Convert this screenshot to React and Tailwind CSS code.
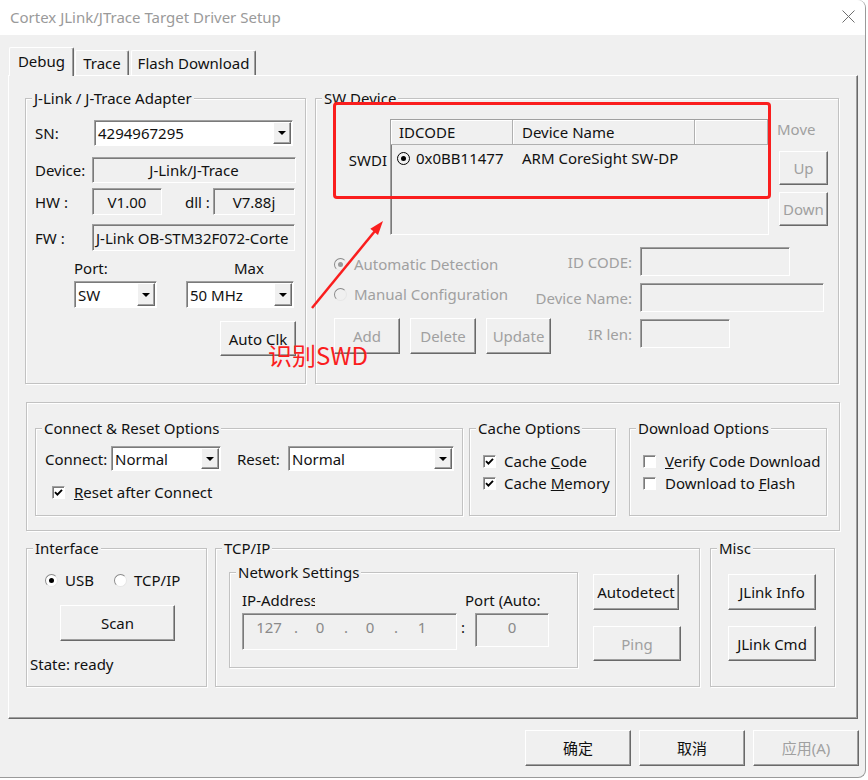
import React from 'react';

const raised =
  'bg-[#f0f0f0] border border-t-white border-l-white border-r-[#696969] border-b-[#696969] shadow-[inset_-1px_-1px_0_#a0a0a0]';
const sunken =
  'border border-t-[#a0a0a0] border-l-[#a0a0a0] border-r-white border-b-white shadow-[inset_1px_1px_0_#7a7a7a]';

function Group({ title, className = '', children }) {
  return (
    <div className={`relative shrink-0 border border-[#c2c2c2] shadow-[inset_1px_1px_0_#fff,1px_1px_0_#fff] ${className}`}>
      {title && (
        <span className="absolute -top-[11px] left-[6px] px-[2px] bg-[#f0f0f0] leading-[20px] whitespace-nowrap">
          {title}
        </span>
      )}
      {children}
    </div>
  );
}

function Btn({ disabled, className = '', children }) {
  return (
    <div className={`${raised} shrink-0 flex items-center justify-center ${disabled ? 'text-[#a0a0a0]' : ''} ${className}`}>
      {children}
    </div>
  );
}

function Field({ className = '', children }) {
  return <div className={`${sunken} shrink-0 flex items-center whitespace-nowrap overflow-hidden ${className}`}>{children}</div>;
}

function Arrow() {
  return (
    <svg width="8" height="4" viewBox="0 0 8 4">
      <path d="M0 0h8L4 4z" fill="#000" />
    </svg>
  );
}

function Combo({ value, className = '' }) {
  return (
    <div className={`${sunken} shrink-0 bg-white flex items-stretch p-[1px] ${className}`}>
      <span className="flex-1 flex items-center pl-[2px] whitespace-nowrap overflow-hidden">{value}</span>
      <span className={`${raised} w-[18px] flex items-center justify-center`}>
        <Arrow />
      </span>
    </div>
  );
}

function Check({ checked }) {
  return (
    <span className={`${sunken} w-[13px] h-[13px] shrink-0 bg-white flex items-center justify-center`}>
      {checked && (
        <svg width="9" height="9" viewBox="0 0 9 9">
          <path d="M1 4.2 L3.4 6.6 L8 1.8" stroke="#000" strokeWidth="1.9" fill="none" />
        </svg>
      )}
    </span>
  );
}

function Radio({ checked, disabled }) {
  return (
    <span
      className={`w-[13px] h-[13px] shrink-0 rounded-full border border-t-[#8a8a8a] border-l-[#8a8a8a] border-r-[#e6e6e6] border-b-[#e6e6e6] flex items-center justify-center ${
        disabled ? 'bg-[#f0f0f0]' : 'bg-white'
      }`}
    >
      {checked && <span className={`w-[5px] h-[5px] rounded-full ${disabled ? 'bg-[#9a9a9a]' : 'bg-black'}`} />}
    </span>
  );
}

function Tab({ active, className = '', children }) {
  return (
    <div
      className={`flex items-center justify-center bg-[#f0f0f0] border-t border-l border-r border-t-white border-l-white border-r-[#696969] shadow-[inset_-1px_0_0_#a0a0a0] rounded-t-[2px] ${
        active ? 'relative z-10 h-[29px] -mb-[1px] pb-[3px]' : 'h-[25px] pb-[1px]'
      } ${className}`}
    >
      {children}
    </div>
  );
}

const header = 'flex items-center border-r border-b border-[#b0b0b0] shadow-[inset_1px_1px_0_#fff]';

export default function App() {
  return (
    <div className="relative w-[868px] h-[780px] bg-white overflow-hidden font-['Noto_Sans','Noto_Sans_CJK_SC',sans-serif] text-[15px] leading-[20px] text-[#111]">
      <div className="w-[866px] h-[778px] bg-[#f0f0f0] border-r border-b border-[#9a9a9a] rounded-r-[8px] flex flex-col">
        {/* title bar */}
        <div className="h-[35px] shrink-0 bg-white rounded-tr-[8px] flex items-center justify-between pl-[10px] pr-[10px] pb-[2px]">
          <span className="text-[15px] text-[#9a9a9a]">Cortex JLink/JTrace Target Driver Setup</span>
          <svg width="13" height="13" viewBox="0 0 13 13">
            <path d="M0.5 0.5L12.5 12.5M12.5 0.5L0.5 12.5" stroke="#6e6e6e" strokeWidth="1" />
          </svg>
        </div>

        <div className="pl-[8px] flex flex-col">
          {/* tabs */}
          <div className="mt-[12px] flex items-end">
            <Tab active className="ml-[1px] w-[65px]">Debug</Tab>
            <Tab className="ml-[1px] w-[54px]">Trace</Tab>
            <Tab className="ml-[2px] w-[125px]">Flash Download</Tab>
          </div>

          {/* tab panel */}
          <div className="w-[850px] h-[644px] border border-t-white border-l-white border-r-[#696969] border-b-[#696969] shadow-[inset_-1px_-1px_0_#a0a0a0] pl-[16px] pt-[22px] flex flex-col">
            <div className="flex gap-[9px]">
              <Group title="J-Link / J-Trace Adapter" className="w-[281px] h-[286px] pl-[9px] pt-[21px] flex flex-col">
                <div className="flex items-center h-[26px]">
                  <span className="w-[59px]">SN:</span>
                  <Combo value="4294967295" className="w-[199px] h-[26px]" />
                </div>
                <div className="flex items-center h-[26px] mt-[11px]">
                  <span className="w-[57px]">Device:</span>
                  <Field className="w-[204px] h-[26px] justify-center">J-Link/J-Trace</Field>
                </div>
                <div className="flex items-center h-[27px] mt-[5px]">
                  <span className="w-[57px]">HW :</span>
                  <Field className="w-[70px] h-[27px] justify-center">V1.00</Field>
                  <span className="w-[51px] pl-[23px] whitespace-nowrap">dll :</span>
                  <Field className="w-[82px] h-[27px] justify-center">V7.88j</Field>
                </div>
                <div className="flex items-center h-[27px] mt-[9px]">
                  <span className="w-[57px]">FW :</span>
                  <Field className="w-[203px] h-[27px] pl-[3px]">J-Link OB-STM32F072-Corte</Field>
                </div>
                <div className="flex mt-[7px]">
                  <span className="ml-[39px] w-[160px]">Port:</span>
                  <span>Max</span>
                </div>
                <div className="flex mt-[3px]">
                  <Combo value="SW" className="ml-[39px] w-[83px] h-[27px]" />
                  <Combo value="50 MHz" className="ml-[29px] w-[108px] h-[27px]" />
                </div>
                <Btn className="ml-[185px] mt-[13px] w-[76px] h-[35px]">Auto Clk</Btn>
              </Group>

              <Group title="SW Device" className="w-[524px] h-[286px] pt-[20px] flex flex-col">
                <div className="flex">
                  <div className="w-[74px] shrink-0 pt-[31px] pr-[3px] flex justify-end">SWDI</div>
                  <div className={`${sunken} w-[379px] h-[116px] shrink-0 flex flex-col`}>
                    <div className="flex h-[25px] shrink-0">
                      <div className={`${header} w-[122px] pl-[8px]`}>IDCODE</div>
                      <div className={`${header} w-[182px] pl-[9px]`}>Device Name</div>
                      <div className={`${header} flex-1`} />
                    </div>
                    <div className="mt-[3px] flex items-center h-[20px]">
                      <div className="w-[122px] pl-[6px] flex items-center gap-[6px]">
                        <span className="w-[13px] h-[13px] rounded-full border-[1.5px] border-black flex items-center justify-center">
                          <span className="w-[5px] h-[5px] rounded-full bg-black" />
                        </span>
                        0x0BB11477
                      </div>
                      <div className="pl-[9px]">ARM CoreSight SW-DP</div>
                    </div>
                  </div>
                  <div className="ml-[8px] flex flex-col">
                    <span className="text-[#a0a0a0]">Move</span>
                    <Btn disabled className="ml-[2px] mt-[12px] w-[49px] h-[34px]">Up</Btn>
                    <Btn disabled className="ml-[2px] mt-[7px] w-[49px] h-[34px]">Down</Btn>
                  </div>
                </div>

                <div className="mt-[12px] pl-[18px] flex text-[#a0a0a0]">
                  <div className="w-[217px] shrink-0 pt-[7px] flex flex-col">
                    <div className="flex items-center h-[20px] gap-[7px] whitespace-nowrap">
                      <Radio checked disabled />
                      Automatic Detection
                    </div>
                    <div className="flex items-center h-[20px] gap-[7px] mt-[10px] whitespace-nowrap">
                      <Radio disabled />
                      Manual Configuration
                    </div>
                    <div className="flex gap-[10px] mt-[14px]">
                      <Btn disabled className="w-[66px] h-[36px]">Add</Btn>
                      <Btn disabled className="w-[66px] h-[36px]">Delete</Btn>
                      <Btn disabled className="w-[65px] h-[36px]">Update</Btn>
                    </div>
                  </div>
                  <div className="flex flex-col gap-[7px]">
                    <div className="flex items-center h-[29px]">
                      <span className="w-[81px] flex justify-end whitespace-nowrap">ID CODE:</span>
                      <Field className="ml-[8px] w-[150px] h-[29px]" />
                    </div>
                    <div className="flex items-center h-[29px]">
                      <span className="w-[81px] flex justify-end whitespace-nowrap">Device Name:</span>
                      <Field className="ml-[8px] w-[184px] h-[29px]" />
                    </div>
                    <div className="flex items-center h-[29px]">
                      <span className="w-[81px] flex justify-end whitespace-nowrap">IR len:</span>
                      <Field className="ml-[8px] w-[90px] h-[29px]" />
                    </div>
                  </div>
                </div>
              </Group>
            </div>

            {/* options box */}
            <Group className="mt-[18px] ml-[1px] w-[814px] h-[129px] pl-[8px] pt-[25px] flex items-start">
              <Group title="Connect & Reset Options" className="w-[428px] h-[88px] pl-[9px] pt-[17px] flex flex-col">
                <div className="flex items-center h-[25px]">
                  <span className="w-[66px]">Connect:</span>
                  <Combo value="Normal" className="w-[110px] h-[25px]" />
                  <span className="ml-[16px] w-[51px]">Reset:</span>
                  <Combo value="Normal" className="w-[166px] h-[25px]" />
                </div>
                <div className="mt-[13px] pl-[7px] flex items-center h-[16px] gap-[9px]">
                  <Check checked />
                  <span>
                    <span className="underline">R</span>eset after Connect
                  </span>
                </div>
              </Group>
              <Group title="Cache Options" className="ml-[6px] w-[147px] h-[88px] pl-[13px] pt-[23px] flex flex-col">
                <div className="flex items-center h-[18px] gap-[8px]">
                  <Check checked />
                  <span className="whitespace-nowrap">
                    Cache <span className="underline">C</span>ode
                  </span>
                </div>
                <div className="mt-[4px] flex items-center h-[18px] gap-[8px]">
                  <Check checked />
                  <span className="whitespace-nowrap">
                    Cache <span className="underline">M</span>emory
                  </span>
                </div>
              </Group>
              <Group title="Download Options" className="ml-[13px] w-[198px] h-[88px] pl-[13px] pt-[23px] flex flex-col">
                <div className="flex items-center h-[18px] gap-[9px]">
                  <Check />
                  <span className="whitespace-nowrap">
                    <span className="underline">V</span>erify Code Download
                  </span>
                </div>
                <div className="mt-[4px] flex items-center h-[18px] gap-[9px]">
                  <Check />
                  <span className="whitespace-nowrap">
                    Download to <span className="underline">F</span>lash
                  </span>
                </div>
              </Group>
            </Group>

            {/* interface row */}
            <div className="mt-[17px] ml-[1px] flex items-start">
              <Group title="Interface" className="w-[181px] h-[139px] pt-[21px] flex flex-col">
                <div className="pl-[18px] flex items-center h-[20px]">
                  <div className="w-[69px] flex items-center gap-[7px]">
                    <Radio checked />
                    USB
                  </div>
                  <div className="flex items-center gap-[7px]">
                    <Radio />
                    TCP/IP
                  </div>
                </div>
                <Btn className="ml-[33px] mt-[15px] w-[115px] h-[36px]">Scan</Btn>
                <div className="pl-[3px] mt-[13px]">State: ready</div>
              </Group>

              <Group title="TCP/IP" className="ml-[8px] w-[485px] h-[139px] pl-[13px] pt-[23px] flex items-start">
                <Group title="Network Settings" className="w-[349px] h-[96px] pl-[12px] pt-[17px] flex flex-col">
                  <div className="flex">
                    <span className="w-[73px] overflow-hidden whitespace-nowrap">IP-Address</span>
                    <span className="ml-[150px] whitespace-nowrap">Port (Auto:</span>
                  </div>
                  <div className="mt-[3px] flex items-start">
                    <Field className="w-[215px] h-[37px] items-start pt-[3px] text-[#8a8a8a]">
                      <span className="ml-[6px] w-[40px] text-center">127</span>
                      <span className="w-[14px] text-center">.</span>
                      <span className="w-[34px] text-center">0</span>
                      <span className="w-[18px] text-center">.</span>
                      <span className="w-[30px] text-center">0</span>
                      <span className="w-[22px] text-center">.</span>
                      <span className="w-[30px] text-center">1</span>
                    </Field>
                    <span className="w-[18px] mt-[4px] pl-[4px]">:</span>
                    <Field className="w-[74px] h-[34px] items-start justify-center pt-[3px] text-[#8a8a8a]">0</Field>
                  </div>
                </Group>
                <div className="ml-[15px] flex flex-col">
                  <Btn className="mt-[2px] w-[86px] h-[36px]">Autodetect</Btn>
                  <Btn disabled className="mt-[16px] w-[88px] h-[35px]">Ping</Btn>
                </div>
              </Group>

              <Group title="Misc" className="ml-[10px] w-[125px] h-[139px] pl-[17px] pt-[25px] flex flex-col">
                <Btn className="w-[88px] h-[36px]">JLink Info</Btn>
                <Btn className="mt-[16px] w-[88px] h-[35px]">JLink Cmd</Btn>
              </Group>
            </div>
          </div>
        </div>

        {/* dialog buttons */}
        <div className="mt-[11px] pr-[6px] flex justify-end gap-[8px]">
          <Btn className="w-[106px] h-[36px]">确定</Btn>
          <Btn className="w-[106px] h-[36px]">取消</Btn>
          <Btn disabled className="w-[106px] h-[36px]">应用(A)</Btn>
        </div>
      </div>

      {/* red annotation */}
      <div className="absolute left-[333px] top-[102px] w-[438px] h-[97px] border-[3px] border-[#fa1e1e] rounded-[4px]" />
      <svg className="absolute left-[300px] top-[210px]" width="100" height="110" viewBox="0 0 100 110">
        <path d="M12 98 L75 21" stroke="#fa1e1e" strokeWidth="2.5" />
        <path d="M83 11 L78 25.1 L70.3 18.7 Z" fill="#fa1e1e" />
      </svg>
      <div className="absolute left-[268px] top-[340px] text-[24px] leading-[30px] text-[#fa1e1e] font-['Noto_Sans_CJK_SC','Noto_Sans',sans-serif]">
        识别SWD
      </div>
    </div>
  );
}
